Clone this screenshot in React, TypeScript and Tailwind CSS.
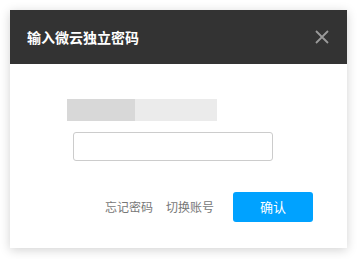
export default function App() {
  return (
    <div
      className="w-[357px] h-[259px] bg-white p-[10px]"
      style={{ fontFamily: '"Noto Sans CJK SC", "Liberation Sans", sans-serif' }}
    >
      <div className="w-[337px] h-[238px] bg-white shadow-[0_2px_10px_rgba(0,0,0,0.18)] flex flex-col">
        <div className="h-[54px] bg-[#333333] flex items-center justify-between pl-[17px] pr-[17px]">
          <span className="text-[14px] font-bold text-white leading-none">输入微云独立密码</span>
          <svg width="14" height="14" viewBox="0 0 14 14" className="mr-[1px]">
            <path d="M1 1 L13 13 M13 1 L1 13" stroke="#9a9a9a" strokeWidth="1.8" />
          </svg>
        </div>
        <div className="flex flex-col pl-[57px] pt-[35px]">
          <div className="flex w-[150px] h-[22px]">
            <div className="w-[68px] bg-[#d8d8d8]" />
            <div className="flex-1 bg-[#ebebeb]" />
          </div>
          <input
            className="mt-[11px] ml-[6px] w-[200px] h-[29px] border border-[#cccccc] rounded-[3px] outline-none"
            type="password"
          />
        </div>
        <div className="flex items-center mt-[31px] pl-[95px]">
          <span className="text-[12px] text-[#777777]">忘记密码</span>
          <span className="text-[12px] text-[#777777] ml-[13px]">切换账号</span>
          <button className="ml-[19px] w-[80px] h-[30px] bg-[#00a2ff] rounded-[3px] text-white text-[13px]">
            确认
          </button>
        </div>
      </div>
    </div>
  );
}
